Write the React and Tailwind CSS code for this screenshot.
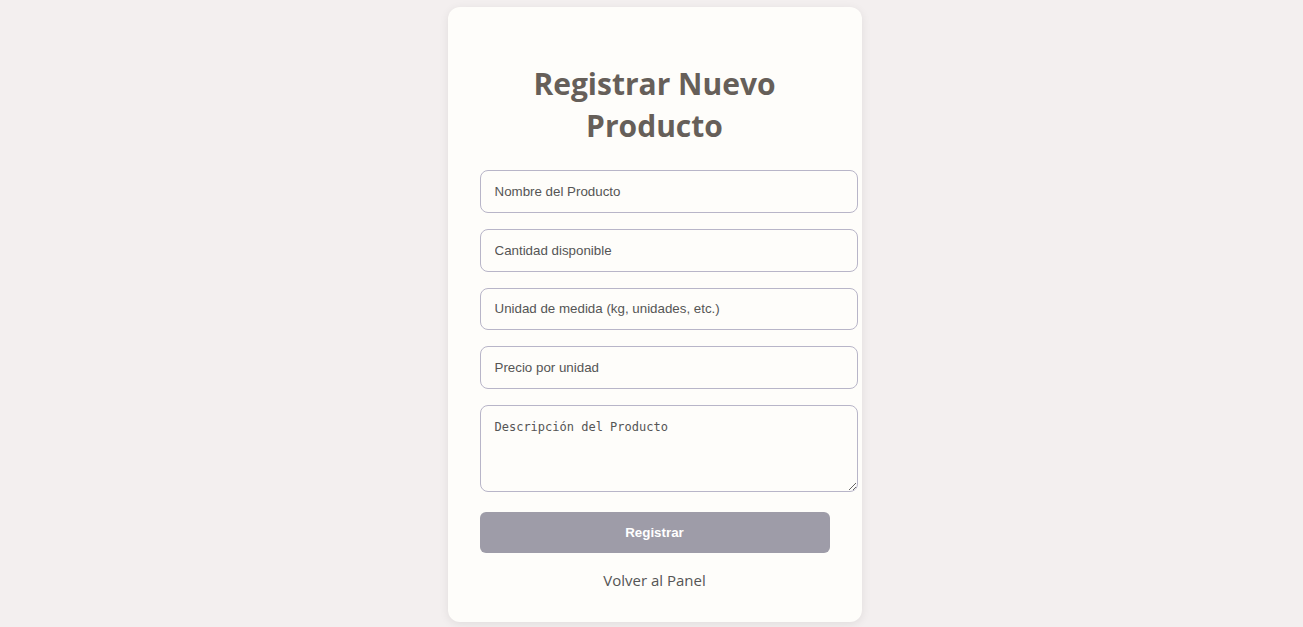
export default function App() {
  const fields = [
    'Nombre del Producto',
    'Cantidad disponible',
    'Unidad de medida (kg, unidades, etc.)',
    'Precio por unidad',
  ];

  return (
    <div className="min-h-[627px] w-full bg-[#f3efef] flex justify-center pt-[7px] pl-[6px]">
      <div className="w-[414px] h-[615px] bg-[#fefdfa] rounded-[12px] shadow-[0_2px_10px_rgba(0,0,0,0.08)] px-8 pt-[56px] flex flex-col">
        <h2 className="text-center font-bold text-[30px] leading-[42px] text-[#665f59] font-['Open_Sans',sans-serif] px-6">
          Registrar Nuevo Producto
        </h2>
        <form className="mt-[23px] flex flex-col">
          {fields.map((f) => (
            <input
              key={f}
              type="text"
              placeholder={f}
              className="w-[378px] h-[42.75px] mb-4 pl-[14px] pr-[13px] border border-[#b8b5c8] rounded-[8px] bg-transparent text-[13.33px] font-['Liberation_Sans',Arial,sans-serif] placeholder:text-[#555] outline-none"
            />
          ))}
          <textarea
            placeholder="Descripción del Producto"
            className="w-[378px] h-[87px] pl-[14px] pr-[13px] py-[12px] border border-[#b8b5c8] rounded-[8px] bg-transparent text-[12px] font-['DejaVu_Sans_Mono',monospace] placeholder:text-[#555] outline-none"
          />
          <button
            type="button"
            className="mt-5 w-[350px] h-[41px] rounded-[6px] bg-[#9e9ca8] text-white font-bold text-[13.33px] font-['Liberation_Sans',Arial,sans-serif]"
          >
            Registrar
          </button>
        </form>
        <p className="mt-[16px] text-center text-[15px] text-[#555] font-['Open_Sans',sans-serif]">
          Volver al Panel
        </p>
      </div>
    </div>
  );
}
